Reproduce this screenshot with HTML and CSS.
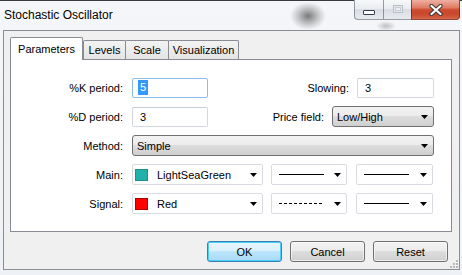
FILE: index.html
```html
<!DOCTYPE html>
<html>
<head>
<meta charset="utf-8">
<title>Stochastic Oscillator</title>
<link rel="stylesheet" href="styles.css">
</head>
<body>
<div class="window">
  <div class="titlebar">
    <div class="title">Stochastic Oscillator</div>
    <div class="caption">
      <div class="cbtn cmin"><span class="min-glyph"></span></div>
      <div class="cbtn cmax"><span class="max-glyph"></span></div>
      <div class="cbtn cclose">
        <svg width="14" height="12" viewBox="0 0 14 12">
          <path d="M2.5 2 L11.5 10 M11.5 2 L2.5 10" stroke="#3a3a3a" stroke-width="4.2" stroke-linecap="round" fill="none"/>
          <path d="M2.5 2 L11.5 10 M11.5 2 L2.5 10" stroke="#ffffff" stroke-width="2.2" stroke-linecap="round" fill="none"/>
        </svg>
      </div>
    </div>
  </div>
  <div class="client">
    <div class="tabs">
      <div class="tab active t-params">Parameters</div>
      <div class="tab t-levels">Levels</div>
      <div class="tab t-scale">Scale</div>
      <div class="tab t-vis">Visualization</div>
    </div>
    <div class="panel">
      <div class="row">
        <div class="lbl">%K period:</div>
        <div class="edit focus ml9"><span class="sel">5</span></div>
        <div class="lbl2">Slowing:</div>
        <div class="edit w77 ml8">3</div>
      </div>
      <div class="row">
        <div class="lbl">%D period:</div>
        <div class="edit ml9">3</div>
        <div class="lbl2">Price field:</div>
        <div class="combo w102 ml8"><span class="ctext">Low/High</span><svg class="arrow" width="7" height="4" viewBox="0 0 7 4"><polygon points="0,0 7,0 3.5,4" fill="#000"/></svg></div>
      </div>
      <div class="row">
        <div class="lbl">Method:</div>
        <div class="combo grow ml9"><span class="ctext">Simple</span><svg class="arrow" width="7" height="4" viewBox="0 0 7 4"><polygon points="0,0 7,0 3.5,4" fill="#000"/></svg></div>
      </div>
      <div class="row">
        <div class="lbl">Main:</div>
        <div class="odsel w131 ml9"><span class="swatch sea"></span><span class="ctext">LightSeaGreen</span><svg class="arrow" width="7" height="4" viewBox="0 0 7 4"><polygon points="0,0 7,0 3.5,4" fill="#000"/></svg></div>
        <div class="odsel w76 ml8"><svg class="line" width="45" height="3" viewBox="0 0 45 3"><line x1="0" y1="1.5" x2="45" y2="1.5" stroke="#000" stroke-width="1"/></svg><svg class="arrow" width="7" height="4" viewBox="0 0 7 4"><polygon points="0,0 7,0 3.5,4" fill="#000"/></svg></div>
        <div class="odsel w77 ml9"><svg class="line" width="45" height="3" viewBox="0 0 45 3"><line x1="0" y1="1.5" x2="45" y2="1.5" stroke="#000" stroke-width="1"/></svg><svg class="arrow" width="7" height="4" viewBox="0 0 7 4"><polygon points="0,0 7,0 3.5,4" fill="#000"/></svg></div>
      </div>
      <div class="row">
        <div class="lbl">Signal:</div>
        <div class="odsel w131 ml9"><span class="swatch red"></span><span class="ctext">Red</span><svg class="arrow" width="7" height="4" viewBox="0 0 7 4"><polygon points="0,0 7,0 3.5,4" fill="#000"/></svg></div>
        <div class="odsel w76 ml8"><svg class="line" width="45" height="3" viewBox="0 0 45 3"><line x1="0" y1="1.5" x2="45" y2="1.5" stroke="#000" stroke-width="1" stroke-dasharray="3 2"/></svg><svg class="arrow" width="7" height="4" viewBox="0 0 7 4"><polygon points="0,0 7,0 3.5,4" fill="#000"/></svg></div>
        <div class="odsel w77 ml9"><svg class="line" width="45" height="3" viewBox="0 0 45 3"><line x1="0" y1="1.5" x2="45" y2="1.5" stroke="#000" stroke-width="1"/></svg><svg class="arrow" width="7" height="4" viewBox="0 0 7 4"><polygon points="0,0 7,0 3.5,4" fill="#000"/></svg></div>
      </div>
    </div>
    <div class="buttons">
      <div class="btn default">OK</div>
      <div class="btn">Cancel</div>
      <div class="btn">Reset</div>
    </div>
    <svg class="grip" width="8" height="8" viewBox="0 0 8 8">
      <g fill="#b8b8b8">
        <rect x="6" y="0" width="2" height="2"/>
        <rect x="3" y="3" width="2" height="2"/><rect x="6" y="3" width="2" height="2"/>
        <rect x="0" y="6" width="2" height="2"/><rect x="3" y="6" width="2" height="2"/><rect x="6" y="6" width="2" height="2"/>
      </g>
    </svg>
  </div>
</div>
</body>
</html>
```

FILE: styles.css
```css
html, body {
  margin: 0;
  padding: 0;
}
body {
  width: 462px;
  height: 275px;
  overflow: hidden;
  background: #f2f4f7;
  font-family: "Liberation Sans", Arial, sans-serif;
  font-size: 11px;
  color: #000;
}
.window {
  height: 275px;
  box-sizing: border-box;
  border-top: 1px solid #3a3a3a;
  display: flex;
  flex-direction: column;
  background:
    radial-gradient(ellipse 18px 14px at 308px 15px, rgba(70,70,70,0.7), rgba(70,70,70,0.25) 60%, rgba(70,70,70,0)),
    radial-gradient(ellipse 10px 5px at 386px 25px, rgba(90,90,90,0.35), rgba(90,90,90,0)),
    linear-gradient(#f4f6f9, #eef1f5);
}
.titlebar {
  height: 29px;
  display: flex;
  justify-content: space-between;
  align-items: flex-start;
}
.title {
  padding: 7px 0 0 4px;
  font-size: 12px;
  line-height: 15px;
  color: #000;
  text-shadow: 0 0 6px #fff, 0 0 3px #fff;
}
.caption {
  display: flex;
  margin-right: 2px;
  margin-top: -1px;
}
.cbtn {
  height: 20px;
  box-sizing: border-box;
  border: 1px solid rgba(70,80,95,0.55);
  border-top: none;
  display: flex;
  align-items: center;
  justify-content: center;
  background: linear-gradient(#f7f8fa 0%, #e9ecf0 45%, #d9dde3 50%, #e7eaee 100%);
}
.cmin {
  width: 29px;
  border-radius: 0 0 0 4px;
  border-right: none;
}
.cmax {
  width: 28px;
  border-right: none;
}
.cclose {
  width: 49px;
  border-radius: 0 0 4px 0;
  border-color: rgba(110,30,20,0.7);
  background: linear-gradient(#eeb0a2 0%, #e07c64 40%, #cc4a30 52%, #c9492d 75%, #d9664b 100%);
}
.min-glyph {
  width: 10px;
  height: 3px;
  border: 1px solid #3a3f48;
  border-radius: 1px;
  background: #fff;
  margin-top: 5px;
}
.max-glyph {
  width: 8px;
  height: 6px;
  border: 1px solid #b9bdc4;
  box-shadow: inset 0 0 0 1px #e3e6ea, inset 0 0 0 2px #c9cdd3;
  background: #eef0f3;
  margin-top: -1px;
}
.client {
  margin: 0 2px 5px 3px;
  height: 240px;
  box-sizing: border-box;
  border: 1px solid #8b8d90;
  background: #f0f0f0;
  padding: 6px 7px 0 6px;
  display: flex;
  flex-direction: column;
  position: relative;
}
.tabs {
  display: flex;
  align-items: flex-end;
  height: 23px;
  margin-bottom: -1px;
  position: relative;
  z-index: 1;
}
.tab {
  box-sizing: border-box;
  height: 19px;
  margin-bottom: 1px;
  border: 1px solid #898c95;
  border-bottom: none;
  border-radius: 2px 2px 0 0;
  background: linear-gradient(#f3f3f3, #e4e4e4);
  display: flex;
  align-items: center;
  justify-content: center;
  margin-left: -1px;
}
.tab.active {
  height: 23px;
  margin-bottom: 0;
  margin-left: 0;
  background: #fff;
  padding-bottom: 1px;
}
.t-params { width: 73px; }
.t-levels { width: 43px; margin-left: 0; }
.t-scale { width: 44px; }
.t-vis { width: 71px; }
.panel {
  height: 173px;
  box-sizing: border-box;
  border: 1px solid #898c95;
  background: #fff;
  padding: 17px 17px 0 0;
  display: flex;
  flex-direction: column;
  gap: 8px;
}
.row {
  display: flex;
  align-items: center;
  height: 21px;
}
.lbl {
  width: 112px;
  text-align: right;
  flex: none;
}
.lbl2 {
  flex: 1;
  text-align: right;
}
.ml8 { margin-left: 8px; }
.ml9 { margin-left: 9px; }
.w76 { width: 76px; }
.w77 { width: 77px; }
.w102 { width: 102px; }
.w131 { width: 131px; }
.grow { flex: 1; }
.edit {
  width: 76px;
  height: 20px;
  box-sizing: border-box;
  border: 1px solid #d3d8df;
  border-top-color: #c6ccd4;
  border-radius: 2px;
  background: #fff;
  padding-left: 7px;
  display: flex;
  align-items: center;
  flex: none;
}
.edit.w77 { width: 77px; }
.edit.focus {
  border-color: #8fbde9;
  padding-left: 5px;
}
.sel {
  background: #3399ff;
  color: #fff;
  padding: 1px 2px;
  line-height: 13px;
}
.combo {
  height: 21px;
  box-sizing: border-box;
  border: 1px solid #707070;
  border-radius: 3px;
  background: linear-gradient(#f2f2f2 0%, #ebebeb 50%, #dddddd 50%, #cfcfcf 100%);
  display: flex;
  align-items: center;
  padding: 0 5px 0 4px;
}
.combo.w102 { flex: none; }
.odsel {
  height: 21px;
  box-sizing: border-box;
  border: 1px solid #d8dce2;
  border-radius: 2px;
  background: #fff;
  display: flex;
  align-items: center;
  padding: 0 5px 0 2px;
  flex: none;
}
.ctext {
  flex: 1;
  white-space: nowrap;
}
.arrow {
  flex: none;
  display: block;
}
.swatch {
  width: 11px;
  height: 10px;
  border: 1px solid #555;
  margin-right: 9px;
  flex: none;
}
.swatch.sea { background: #20b2aa; border-color: #1c8f88; }
.swatch.red { background: #ff0000; border-color: #b00000; }
.line {
  display: block;
  margin-left: 5px;
  margin-right: auto;
}
.buttons {
  display: flex;
  justify-content: flex-end;
  gap: 8px;
  margin-top: 9px;
  padding-right: 4px;
}
.btn {
  width: 75px;
  height: 21px;
  box-sizing: border-box;
  border: 1px solid #707070;
  border-radius: 3px;
  background: linear-gradient(#f2f2f2 0%, #ebebeb 50%, #dddddd 50%, #cfcfcf 100%);
  box-shadow: inset 0 0 0 1px rgba(255,255,255,0.6);
  display: flex;
  align-items: center;
  justify-content: center;
}
.btn.default {
  border-color: #3c7fb1;
  background: linear-gradient(#eaf6fd 0%, #d9f0fc 50%, #bee6fd 50%, #a7d9f5 100%);
  box-shadow: inset 0 0 0 1px #48d0f8;
}
.grip {
  position: absolute;
  right: 1px;
  bottom: 1px;
}
```
